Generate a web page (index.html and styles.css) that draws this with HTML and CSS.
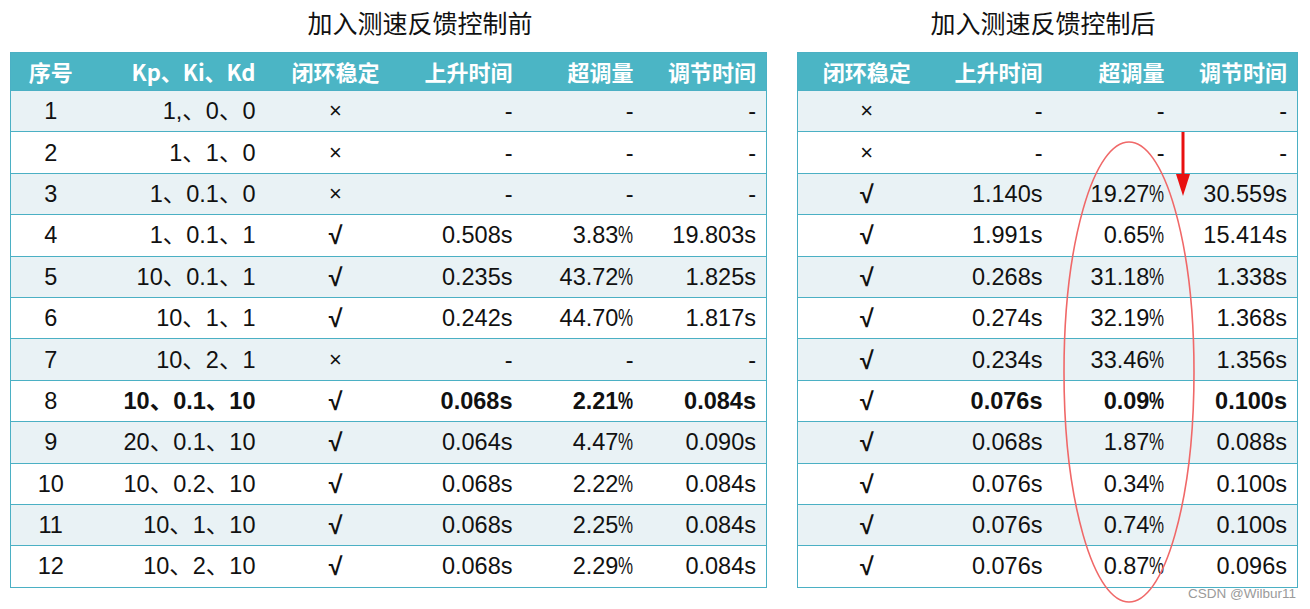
FILE: index.html
```html
<!DOCTYPE html>
<html lang="zh">
<head>
<meta charset="utf-8">
<link rel="stylesheet" href="styles.css">
</head>
<body>
<div class="page">
  <section class="block block-left">
    <h2 class="title">加入测速反馈控制前</h2>
    <table class="tbl">
      <colgroup><col class="c-no"><col class="c-k"><col class="c-st"><col class="c-rt"><col class="c-os"><col class="c-ts"></colgroup>
      <thead><tr><th class="ctr">序号</th><th class="rt">Kp、Ki、Kd</th><th class="ctr">闭环稳定</th><th class="rt">上升时间</th><th class="rt">超调量</th><th class="rt">调节时间</th></tr></thead>
      <tbody>
        <tr><td class="ctr">1</td><td class="rt">1,、0、0</td><td class="ctr mk">×</td><td class="rt">-</td><td class="rt">-</td><td class="rt">-</td></tr>
        <tr><td class="ctr">2</td><td class="rt">1、1、0</td><td class="ctr mk">×</td><td class="rt">-</td><td class="rt">-</td><td class="rt">-</td></tr>
        <tr><td class="ctr">3</td><td class="rt">1、0.1、0</td><td class="ctr mk">×</td><td class="rt">-</td><td class="rt">-</td><td class="rt">-</td></tr>
        <tr><td class="ctr">4</td><td class="rt">1、0.1、1</td><td class="ctr mk ok">√</td><td class="rt">0.508s</td><td class="rt">3.83<span class="pct">%</span></td><td class="rt">19.803s</td></tr>
        <tr><td class="ctr">5</td><td class="rt">10、0.1、1</td><td class="ctr mk ok">√</td><td class="rt">0.235s</td><td class="rt">43.72<span class="pct">%</span></td><td class="rt">1.825s</td></tr>
        <tr><td class="ctr">6</td><td class="rt">10、1、1</td><td class="ctr mk ok">√</td><td class="rt">0.242s</td><td class="rt">44.70<span class="pct">%</span></td><td class="rt">1.817s</td></tr>
        <tr><td class="ctr">7</td><td class="rt">10、2、1</td><td class="ctr mk">×</td><td class="rt">-</td><td class="rt">-</td><td class="rt">-</td></tr>
        <tr class="best"><td class="ctr norm">8</td><td class="rt">10、0.1、10</td><td class="ctr mk ok">√</td><td class="rt">0.068s</td><td class="rt">2.21<span class="pct">%</span></td><td class="rt">0.084s</td></tr>
        <tr><td class="ctr">9</td><td class="rt">20、0.1、10</td><td class="ctr mk ok">√</td><td class="rt">0.064s</td><td class="rt">4.47<span class="pct">%</span></td><td class="rt">0.090s</td></tr>
        <tr><td class="ctr">10</td><td class="rt">10、0.2、10</td><td class="ctr mk ok">√</td><td class="rt">0.068s</td><td class="rt">2.22<span class="pct">%</span></td><td class="rt">0.084s</td></tr>
        <tr><td class="ctr">11</td><td class="rt">10、1、10</td><td class="ctr mk ok">√</td><td class="rt">0.068s</td><td class="rt">2.25<span class="pct">%</span></td><td class="rt">0.084s</td></tr>
        <tr><td class="ctr">12</td><td class="rt">10、2、10</td><td class="ctr mk ok">√</td><td class="rt">0.068s</td><td class="rt">2.29<span class="pct">%</span></td><td class="rt">0.084s</td></tr>
      </tbody>
    </table>
  </section>
  <section class="block block-right">
    <h2 class="title">加入测速反馈控制后</h2>
    <div class="tbl-wrap">
      <table class="tbl">
        <colgroup><col class="r-st"><col class="r-rt"><col class="r-os"><col class="r-ts"></colgroup>
        <thead><tr><th class="ctr">闭环稳定</th><th class="rt">上升时间</th><th class="rt">超调量</th><th class="rt">调节时间</th></tr></thead>
        <tbody>
          <tr><td class="ctr mk">×</td><td class="rt">-</td><td class="rt">-</td><td class="rt">-</td></tr>
          <tr><td class="ctr mk">×</td><td class="rt">-</td><td class="rt">-</td><td class="rt">-</td></tr>
          <tr><td class="ctr mk ok">√</td><td class="rt">1.140s</td><td class="rt">19.27<span class="pct">%</span></td><td class="rt">30.559s</td></tr>
          <tr><td class="ctr mk ok">√</td><td class="rt">1.991s</td><td class="rt">0.65<span class="pct">%</span></td><td class="rt">15.414s</td></tr>
          <tr><td class="ctr mk ok">√</td><td class="rt">0.268s</td><td class="rt">31.18<span class="pct">%</span></td><td class="rt">1.338s</td></tr>
          <tr><td class="ctr mk ok">√</td><td class="rt">0.274s</td><td class="rt">32.19<span class="pct">%</span></td><td class="rt">1.368s</td></tr>
          <tr><td class="ctr mk ok">√</td><td class="rt">0.234s</td><td class="rt">33.46<span class="pct">%</span></td><td class="rt">1.356s</td></tr>
          <tr class="best"><td class="ctr mk ok">√</td><td class="rt">0.076s</td><td class="rt">0.09<span class="pct">%</span></td><td class="rt">0.100s</td></tr>
          <tr><td class="ctr mk ok">√</td><td class="rt">0.068s</td><td class="rt">1.87<span class="pct">%</span></td><td class="rt">0.088s</td></tr>
          <tr><td class="ctr mk ok">√</td><td class="rt">0.076s</td><td class="rt">0.34<span class="pct">%</span></td><td class="rt">0.100s</td></tr>
          <tr><td class="ctr mk ok">√</td><td class="rt">0.076s</td><td class="rt">0.74<span class="pct">%</span></td><td class="rt">0.100s</td></tr>
          <tr><td class="ctr mk ok">√</td><td class="rt">0.076s</td><td class="rt">0.87<span class="pct">%</span></td><td class="rt">0.096s</td></tr>
        </tbody>
      </table>
      <svg class="marks" width="500" height="560" viewBox="0 0 500 560" aria-hidden="true">
        <ellipse cx="332" cy="320" rx="65" ry="230" fill="none" stroke="#f06868" stroke-width="1.6"/>
        <line x1="386" y1="80" x2="386" y2="126" stroke="#e81010" stroke-width="3"/>
        <polygon points="379,122 393,122 386,144" fill="#e81010"/>
      </svg>
    </div>
  </section>
  <div class="watermark">CSDN @Wilbur11</div>
</div>
</body>
</html>
```
FILE: styles.css
```css
html, body {
  margin: 0;
  padding: 0;
  background: #ffffff;
}
body {
  font-family: "Noto Sans CJK SC", "Noto Sans", sans-serif;
  color: #111;
}
.page {
  position: relative;
  width: 1310px;
  height: 609px;
  display: flex;
  gap: 31px;
  padding-left: 10px;
  box-sizing: border-box;
}
.block {
  display: flex;
  flex-direction: column;
}
.block-left { width: 756px; }
.block-right { width: 500px; }
.title {
  margin: 0;
  height: 52px;
  line-height: 44px;
  font-size: 25px;
  font-weight: 400;
  text-align: center;
  color: #111;
}
.block-left .title { padding-left: 64px; }
.block-right .title { padding-right: 8px; }
.tbl-wrap { position: relative; }
.tbl {
  width: 100%;
  border-collapse: collapse;
  table-layout: fixed;
  border: 1px solid #4bb0c4;
}
.c-no { width: 80px; }
.c-k { width: 175px; }
.c-st { width: 140px; }
.c-rt { width: 117px; }
.c-os { width: 121px; }
.c-ts { width: 123px; }
.r-st { width: 138px; }
.r-rt { width: 117px; }
.r-os { width: 122px; }
.r-ts { width: 123px; }
.tbl th {
  background: #4bb5c5;
  color: #ffffff;
  font-size: 22px;
  font-weight: 700;
  height: 37px;
  padding: 0 10px;
  line-height: 37px;
  white-space: nowrap;
}
.tbl td {
  height: 40.4px;
  padding: 0 10px;
  font-family: "Liberation Sans", "Noto Sans CJK SC", sans-serif;
  font-size: 23.5px;
  line-height: 40px;
  border-top: 1px solid #4bb0c4;
  white-space: nowrap;
}
.tbl td.mk {
  font-family: "Liberation Sans", "DejaVu Sans", sans-serif;
  font-size: 22px;
}
.tbl td.ok {
  font-size: 25px;
  font-weight: 700;
}
.pct {
  display: inline-block;
  transform: scaleX(0.72);
  transform-origin: left center;
  margin-right: -5.8px;
}
.tbl tbody tr:nth-child(odd) td { background: #e9f2f5; }
.tbl tbody tr:nth-child(even) td { background: #ffffff; }
.ctr { text-align: center; }
.rt { text-align: right; }
.best td { font-weight: 700; }
.best td.norm { font-weight: 400; }
.marks {
  position: absolute;
  left: 0;
  top: 0;
  pointer-events: none;
  overflow: visible;
}
.watermark {
  position: absolute;
  right: 14px;
  bottom: 8px;
  font-family: "Liberation Sans", Arial, sans-serif;
  font-size: 13.5px;
  color: #9a9a9a;
}
```
